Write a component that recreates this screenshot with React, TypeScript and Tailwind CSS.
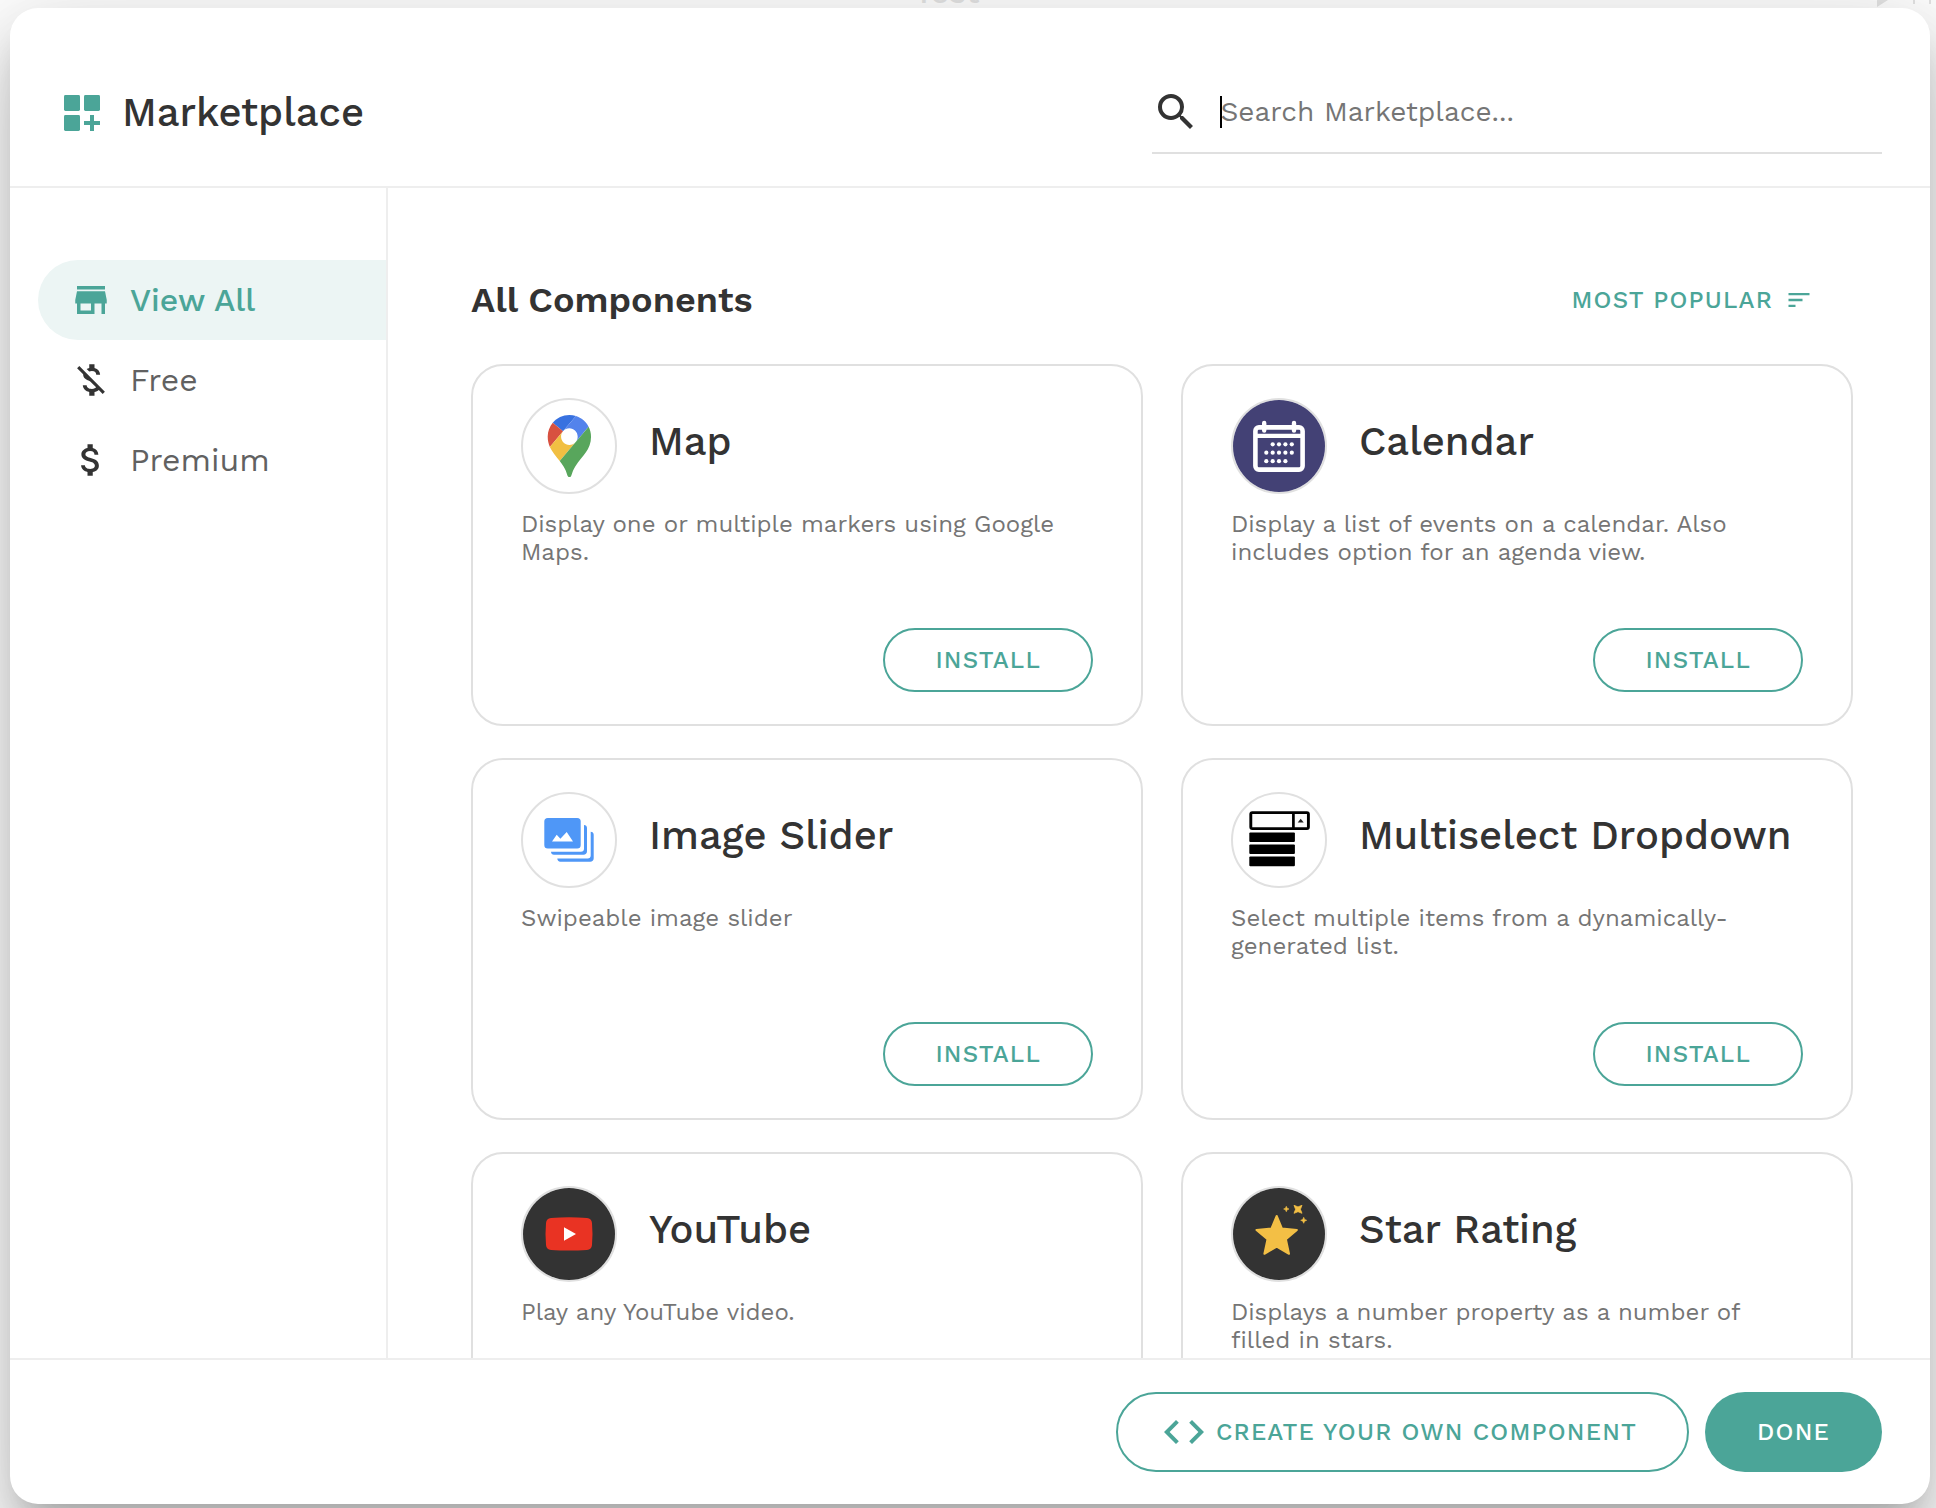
import type { ReactNode } from "react";
import { MdAttachMoney, MdCode, MdMoneyOff, MdSearch, MdSort, MdStore } from "react-icons/md";

const MapIcon = () => (
  <svg viewBox="0 0 92 92" className="size-full" aria-hidden="true">
    <g transform="translate(24.7 15) scale(0.469)">
      <path fill="#3871e0" d="M60.2 2.2C55.8.8 51 0 46.1 0 32 0 19.3 6.4 10.8 16.5l21.8 18.3L60.2 2.2z" />
      <path fill="#d85140" d="M10.8 16.5C4.1 24.5 0 34.9 0 46.1c0 8.7 1.7 15.7 4.6 22l28-33.3-21.8-18.3z" />
      <path fill="#5383ec" d="M46.2 28.5c9.8 0 17.7 7.9 17.7 17.7 0 4.3-1.6 8.3-4.2 11.4 0 0 13.9-16.6 27.5-32.7-5.6-10.8-15.3-19-27-22.7L32.6 34.8c3.3-3.8 8.1-6.3 13.6-6.3" />
      <path fill="#f1bf42" d="M46.2 63.8c-9.8 0-17.7-7.9-17.7-17.7 0-4.3 1.5-8.3 4.1-11.3l-28 33.3c4.8 10.6 12.8 19.2 21 29.9l34.1-40.5c-3.3 3.9-8.1 6.3-13.5 6.3" />
      <path fill="#58a65c" d="M59.1 109.2c15.4-24.1 33.3-35 33.3-63 0-7.7-1.9-14.9-5.2-21.3L25.6 98c2.6 3.4 5.3 7.3 7.9 11.3 9.4 14.5 6.8 23.1 12.8 23.1s3.4-8.7 12.8-23.2" />
    </g>
  </svg>
);

const calendarDots: [number, number][] = [
  [39.7, 44.3], [46, 44.3], [52.4, 44.3], [58.8, 44.3],
  [33.3, 52.7], [39.7, 52.7], [46, 52.7], [52.4, 52.7], [58.8, 52.7],
  [33.3, 61.2], [39.7, 61.2], [46, 61.2], [52.4, 61.2],
];

const CalendarIcon = () => (
  <svg viewBox="0 0 92 92" className="size-full" aria-hidden="true">
    <rect width="92" height="92" fill="#434175" />
    <rect x="22.4" y="27.4" width="47.2" height="42.2" rx="3.5" fill="none" stroke="#fff" strokeWidth="4.6" />
    <path d="M22 35.8h48" stroke="#fff" strokeWidth="4.2" />
    <path d="M31.2 23v7.5M61 23v7.5" stroke="#fff" strokeWidth="4.4" strokeLinecap="round" />
    {calendarDots.map(([x, y]) => (
      <circle key={`${x}-${y}`} cx={x} cy={y} r="2.1" fill="#fff" />
    ))}
  </svg>
);

const SliderIcon = () => (
  <svg viewBox="0 0 92 92" className="size-full" aria-hidden="true">
    <rect x="21.3" y="24" width="36.4" height="30.4" rx="3.5" fill="#4f97f7" />
    <path fill="#fff" d="M29 47.4l4.7-6.7 3.7 4L43.7 38 50 47.4z" />
    <path fill="#4f97f7" d="M61 31c1.8 0 3 1.2 3 3v23.2c0 2-1.5 3.5-3.5 3.5H31c-1.7 0-3-1.2-3-3h30c1.8 0 3-1.2 3-3z" />
    <path fill="#4f97f7" d="M67.7 37.7c1.8 0 3 1.2 3 3v23.5c0 2-1.5 3.5-3.5 3.5H37.3c-1.7 0-3-1.3-3-3.2h30.4c1.8 0 3-1.2 3-3z" />
  </svg>
);

const MultiselectIcon = () => (
  <svg viewBox="0 0 92 92" className="size-full" aria-hidden="true">
    <rect x="17.8" y="18.6" width="57.6" height="16" rx="1.5" fill="#fcfcfc" stroke="#000" strokeWidth="2.9" />
    <path d="M60.4 18v17" stroke="#000" strokeWidth="2.7" />
    <path d="M67.7 24.7l3 3.8h-6z" fill="#222" />
    <rect x="16.3" y="38.5" width="45.6" height="9.6" rx="1" />
    <rect x="16.3" y="50.5" width="45.6" height="9.6" rx="1" />
    <rect x="16.3" y="62.6" width="45.6" height="9.6" rx="1" />
  </svg>
);

const YouTubeIcon = () => (
  <svg viewBox="0 0 92 92" className="size-full" aria-hidden="true">
    <rect width="92" height="92" fill="#333" />
    <path fill="#e93323" d="M28 29.9q18-1.2 36 0 4.6.4 5 5 1 11 0 22-.4 4.6-5 5-18 1.2-36 0-4.6-.4-5-5-1-11 0-22 .4-4.6 5-5z" />
    <path fill="#fff" d="M41 39.3L53 46l-12 6.7z" />
  </svg>
);

const StarIcon = () => (
  <svg viewBox="0 0 92 92" className="size-full" aria-hidden="true">
    <rect width="92" height="92" fill="#333" />
    <g fill="#f3bf45" stroke="#f3bf45" strokeLinejoin="round">
      <path strokeWidth="2" d="M43.7 28l5.2 12.5 15 1.5-11 9.3L56 65.8l-12.3-7.2-12.3 7.2 3.1-14.5-11-9.3 15-1.5z" />
      <path strokeWidth="0.6" d="M53.3 18.3l.8 1.9 1.9.8-1.9.8-.8 1.9-.8-1.9-1.9-.8 1.9-.8z" />
      <path strokeWidth="0.6" d="M70.7 29.3l.9 2.1 2.1.9-2.1.9-.9 2.1-.9-2.1-2.1-.9 2.1-.9z" />
      <path strokeWidth="0.8" d="M61 17.3l4 1.6 4-1.6-1.6 4 1.6 4-4-1.6-4 1.6 1.6-4z" />
    </g>
  </svg>
);

const LogoIcon = () => (
  <svg viewBox="0 0 24 24" className="size-12 text-[#4ba598]" fill="currentColor" aria-hidden="true">
    <rect x="3" y="3" width="8" height="8" rx="0.7" />
    <rect x="13" y="3" width="8" height="8" rx="0.7" />
    <rect x="3" y="13" width="8" height="8" rx="0.7" />
    <path d="M18 13h-2v3h-3v2h3v3h2v-3h3v-2h-3z" />
  </svg>
);

const categories = [
  { label: "View All", icon: MdStore, active: true },
  { label: "Free", icon: MdMoneyOff, active: false },
  { label: "Premium", icon: MdAttachMoney, active: false },
];

const components: { name: string; description: string; icon: ReactNode }[] = [
  { name: "Map", description: "Display one or multiple markers using Google Maps.", icon: <MapIcon /> },
  { name: "Calendar", description: "Display a list of events on a calendar. Also includes option for an agenda view.", icon: <CalendarIcon /> },
  { name: "Image Slider", description: "Swipeable image slider", icon: <SliderIcon /> },
  { name: "Multiselect Dropdown", description: "Select multiple items from a dynamically-generated list.", icon: <MultiselectIcon /> },
  { name: "YouTube", description: "Play any YouTube video.", icon: <YouTubeIcon /> },
  { name: "Star Rating", description: "Displays a number property as a number of filled in stars.", icon: <StarIcon /> },
];

function ComponentCard({ name, description, icon }: { name: string; description: string; icon: ReactNode }) {
  return (
    <article className="flex min-h-[362px] flex-col rounded-[32px] border-2 border-[#e0e0e0] px-12 py-8">
      <div className="flex items-center gap-8">
        <div className="size-24 shrink-0 overflow-hidden rounded-full border-2 border-[#e0e0e0]">{icon}</div>
        <h3 className="pb-2 text-[40px] leading-12 font-medium whitespace-nowrap text-[#333]">{name}</h3>
      </div>
      <p className="mt-4 text-2xl leading-7 text-[#757575]">{description}</p>
      <button
        type="button"
        className="mt-auto h-16 self-end rounded-full border-2 border-[#4ba598] px-[50px] text-2xl font-medium tracking-wider text-[#4ba598]"
      >
        INSTALL
      </button>
    </article>
  );
}

export default function App() {
  return (
    <div className="relative h-screen overflow-hidden bg-white pt-2 pr-1.5 pb-1 pl-2.5 font-['Work_Sans',Inter,sans-serif]">
      <div aria-hidden="true" className="absolute inset-x-0 top-0 h-2 overflow-hidden text-[#e4e4e4]">
        <span className="absolute bottom-1 left-[914px] text-[32px] leading-6 font-medium">Test</span>
        <svg viewBox="0 0 60 8" className="absolute top-0 right-0 h-2 w-[60px]">
          <path d="M1 0h11L1 7z" fill="currentColor" />
          <path d="M38 0v4M54 0v4" stroke="currentColor" strokeWidth="2" />
        </svg>
      </div>

      <div
        role="dialog"
        aria-label="Marketplace"
        className="relative flex h-full flex-col rounded-[28px] bg-white text-[#333] shadow-[0_22px_30px_-14px_rgba(0,0,0,0.2),0_48px_76px_6px_rgba(0,0,0,0.14),0_18px_92px_16px_rgba(0,0,0,0.12)]"
      >
        <header className="flex h-[180px] shrink-0 items-center justify-between border-b-2 border-[#eee] px-12 pt-8">
          <div className="flex items-center gap-4">
            <LogoIcon />
            <h1 className="text-[40px] leading-12 font-medium">Marketplace</h1>
          </div>
          <label className="flex h-[82px] w-2/5 items-center gap-5 border-b-2 border-[#e0e0e0]">
            <MdSearch className="size-12 shrink-0" aria-hidden="true" />
            <span className="relative flex-1">
              <span className="absolute top-0 left-0 h-8 w-0.5 bg-black" />
              <input
                type="text"
                aria-label="Search Marketplace"
                placeholder="Search Marketplace..."
                className="block h-8 w-full bg-transparent text-[28px] leading-8 outline-none placeholder:text-[#757575]"
              />
            </span>
          </label>
        </header>

        <div className="flex min-h-0 flex-1">
          <nav className="w-[378px] shrink-0 border-r-2 border-[#eee] pt-[72px] pl-7">
            {categories.map(({ label, icon: Icon, active }) => (
              <button
                key={label}
                type="button"
                className={
                  active
                    ? "flex h-20 w-full items-center gap-[18px] rounded-l-full bg-[#ecf5f4] pl-8 text-[32px] leading-10 font-medium text-[#4ba598]"
                    : "flex h-20 w-full items-center gap-[18px] rounded-l-full pl-8 text-[32px] leading-10 text-[#616161]"
                }
              >
                <Icon className={active ? "size-[42px]" : "size-[42px] text-[#333]"} aria-hidden="true" />
                {label}
              </button>
            ))}
          </nav>

          <main className="min-w-0 flex-1 overflow-hidden pt-[88px] pr-[77px] pl-[83px]">
            <div className="mb-10 flex h-12 items-center justify-between pr-10">
              <h2 className="text-4xl leading-12 font-semibold">All Components</h2>
              <button type="button" className="flex items-center gap-3 text-2xl font-medium tracking-wider text-[#4ba598]">
                MOST POPULAR
                <MdSort className="size-7" aria-hidden="true" />
              </button>
            </div>
            <div className="grid grid-cols-2 gap-x-[38px] gap-y-8">
              {components.map((component) => (
                <ComponentCard key={component.name} {...component} />
              ))}
            </div>
          </main>
        </div>

        <footer className="flex h-[146px] shrink-0 items-center justify-end gap-4 border-t-2 border-[#eee] pr-12">
          <button
            type="button"
            className="flex h-20 items-center gap-2 rounded-full border-2 border-[#4ba598] pr-[50px] pl-[42px] text-2xl font-medium tracking-wider text-[#4ba598]"
          >
            <MdCode className="size-12" aria-hidden="true" />
            CREATE YOUR OWN COMPONENT
          </button>
          <button type="button" className="h-20 rounded-full bg-[#4ba598] px-[52px] text-2xl font-medium tracking-wider text-white">
            DONE
          </button>
        </footer>
      </div>
    </div>
  );
}
